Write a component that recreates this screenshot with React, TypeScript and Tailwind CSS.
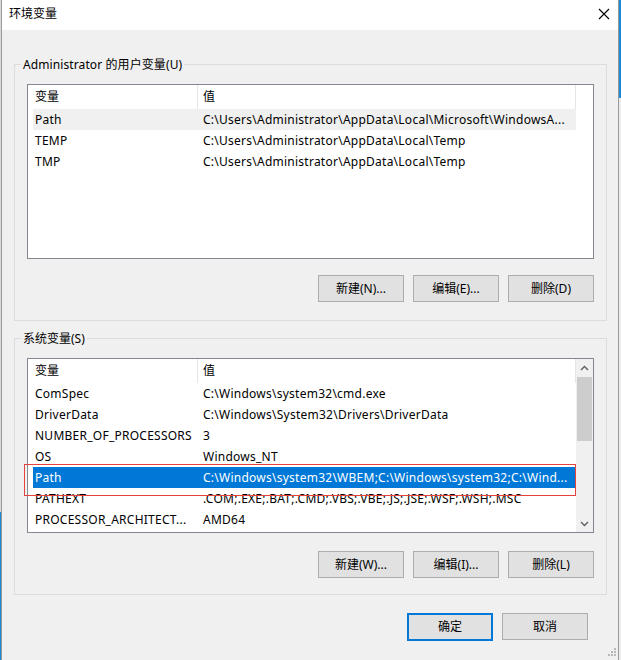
import React from 'react';

type Row = { name: string; value: string };

const userRows: Row[] = [
  { name: 'Path', value: 'C:\\Users\\Administrator\\AppData\\Local\\Microsoft\\WindowsA...' },
  { name: 'TEMP', value: 'C:\\Users\\Administrator\\AppData\\Local\\Temp' },
  { name: 'TMP', value: 'C:\\Users\\Administrator\\AppData\\Local\\Temp' },
];

const systemRows: Row[] = [
  { name: 'ComSpec', value: 'C:\\Windows\\system32\\cmd.exe' },
  { name: 'DriverData', value: 'C:\\Windows\\System32\\Drivers\\DriverData' },
  { name: 'NUMBER_OF_PROCESSORS', value: '3' },
  { name: 'OS', value: 'Windows_NT' },
  { name: 'Path', value: 'C:\\Windows\\system32\\WBEM;C:\\Windows\\system32;C:\\Wind...' },
  { name: 'PATHEXT', value: '.COM;.EXE;.BAT;.CMD;.VBS;.VBE;.JS;.JSE;.WSF;.WSH;.MSC' },
  { name: 'PROCESSOR_ARCHITECT...', value: 'AMD64' },
];

function Chevron({ up }: { up?: boolean }) {
  return (
    <svg width="9" height="6" viewBox="0 0 9 6" className={up ? '' : 'rotate-180'}>
      <path d="M1 5 L4.5 1.5 L8 5" fill="none" stroke="#606060" strokeWidth="1.4" />
    </svg>
  );
}

function ScrollBar() {
  return (
    <div className="flex h-full w-[17px] flex-col bg-[#f0f0f0]">
      <div className="flex h-[17px] items-center justify-center">
        <Chevron up />
      </div>
      <div className="mt-[1px] h-[64px] mx-[1px] bg-[#cdcdcd]" />
      <div className="flex-1" />
      <div className="flex h-[17px] items-center justify-center">
        <Chevron />
      </div>
    </div>
  );
}

function ListView({
  rows,
  hovered,
  selected,
  scroll,
  children,
}: {
  rows: Row[];
  hovered?: number;
  selected?: number;
  scroll?: boolean;
  children?: React.ReactNode;
}) {
  return (
    <div className="relative flex h-[175px] border border-[#828790] bg-white">
      <div className="w-[543px] ml-[5px] flex flex-col">
        <div className="flex h-[24px] items-center">
          <div className="h-full w-[165px] border-r border-[#e5e5e5] pl-[2px] flex items-center">变量</div>
          <div className="h-full w-[378px] border-r border-[#e5e5e5] pl-[5px] flex items-center">值</div>
        </div>
        {rows.map((r, i) => (
          <div
            key={r.name}
            className={`flex h-[21px] items-center pt-[1px] tracking-[0.25px] ${
              i === selected ? 'bg-[#0078d7] text-white' : i === hovered ? 'bg-[#f0f0f0]' : ''
            }`}
          >
            <div className="w-[165px] pl-[2px] whitespace-nowrap overflow-hidden">{r.name}</div>
            <div className="flex-1 pl-[5px] whitespace-nowrap overflow-hidden">{r.value}</div>
          </div>
        ))}
      </div>
      <div className="w-[17px]">{scroll && <ScrollBar />}</div>
      {children}
    </div>
  );
}

function Btn({ label, primary }: { label: string; primary?: boolean }) {
  return (
    <button
      className={`h-[27px] w-[86px] bg-[#e1e1e1] text-black ${
        primary ? 'border-2 border-[#0078d7] h-[28px] w-[85px]' : 'border border-[#adadad]'
      }`}
    >
      {label}
    </button>
  );
}

export default function App() {
  return (
    <div className="flex h-[660px] w-[621px] overflow-hidden font-['Noto_Sans','Noto_Sans_CJK_SC',sans-serif] text-[12px] leading-[16px] text-black">
      <div className="flex w-[1px] flex-col">
        <div className="h-[512px] bg-[#d9d9d9]" />
        <div className="flex-1 bg-[#1a8ad8]" />
      </div>

      <div className="relative flex w-[618px] flex-col border-x border-[#9a9a9a] bg-[#f0f0f0]">
        <div className="flex h-[30px] items-center justify-between bg-white pl-[7px] pr-[8px] pb-[2px]">
          <span>环境变量</span>
          <svg width="12" height="12" viewBox="0 0 12 12">
            <path d="M1 1 L11 11 M11 1 L1 11" stroke="#000" strokeWidth="1.1" />
          </svg>
        </div>

        <div className="pl-[12px] pr-[11px]">
          <fieldset className="mt-[25px] border border-[#dcdcdc]">
            <legend className="ml-[6px] px-[2px] pt-[2px] leading-[16px] tracking-[0.1px]">Administrator 的用户变量(U)</legend>
            <div className="px-[12px] pt-[11px] pb-[18px]">
              <ListView rows={userRows} hovered={0} />
              <div className="mt-[16px] flex justify-end gap-[9px]">
                <Btn label="新建(N)..." />
                <Btn label="编辑(E)..." />
                <Btn label="删除(D)" />
              </div>
            </div>
          </fieldset>

          <fieldset className="mt-[8px] border border-[#dcdcdc]">
            <legend className="ml-[6px] px-[2px] pt-[2px] leading-[16px]">系统变量(S)</legend>
            <div className="px-[12px] pt-[11px] pb-[16px]">
              <ListView rows={systemRows} selected={4} scroll>
                <div className="pointer-events-none absolute left-[-4px] top-[105px] h-[32px] w-[552px] border border-[#e8413b]" />
              </ListView>
              <div className="mt-[18px] flex justify-end gap-[9px]">
                <Btn label="新建(W)..." />
                <Btn label="编辑(I)..." />
                <Btn label="删除(L)" />
              </div>
            </div>
          </fieldset>
        </div>

        <div className="mt-[18px] flex justify-end gap-[9px] pr-[30px]">
          <Btn label="确定" primary />
          <Btn label="取消" />
        </div>

        <svg className="absolute bottom-[4px] right-[2px]" width="8" height="8" viewBox="0 0 8 8">
          <rect x="6" y="0" width="2" height="2" fill="#b8b8b8" />
          <rect x="3" y="3" width="2" height="2" fill="#b8b8b8" />
          <rect x="6" y="3" width="2" height="2" fill="#b8b8b8" />
          <rect x="0" y="6" width="2" height="2" fill="#b8b8b8" />
          <rect x="3" y="6" width="2" height="2" fill="#b8b8b8" />
          <rect x="6" y="6" width="2" height="2" fill="#b8b8b8" />
        </svg>
      </div>

      <div className="flex w-[2px] flex-col">
        <div className="h-[98px] bg-[#1a8ad8]" />
        <div className="flex-1 bg-[#ececec]" />
      </div>
    </div>
  );
}
